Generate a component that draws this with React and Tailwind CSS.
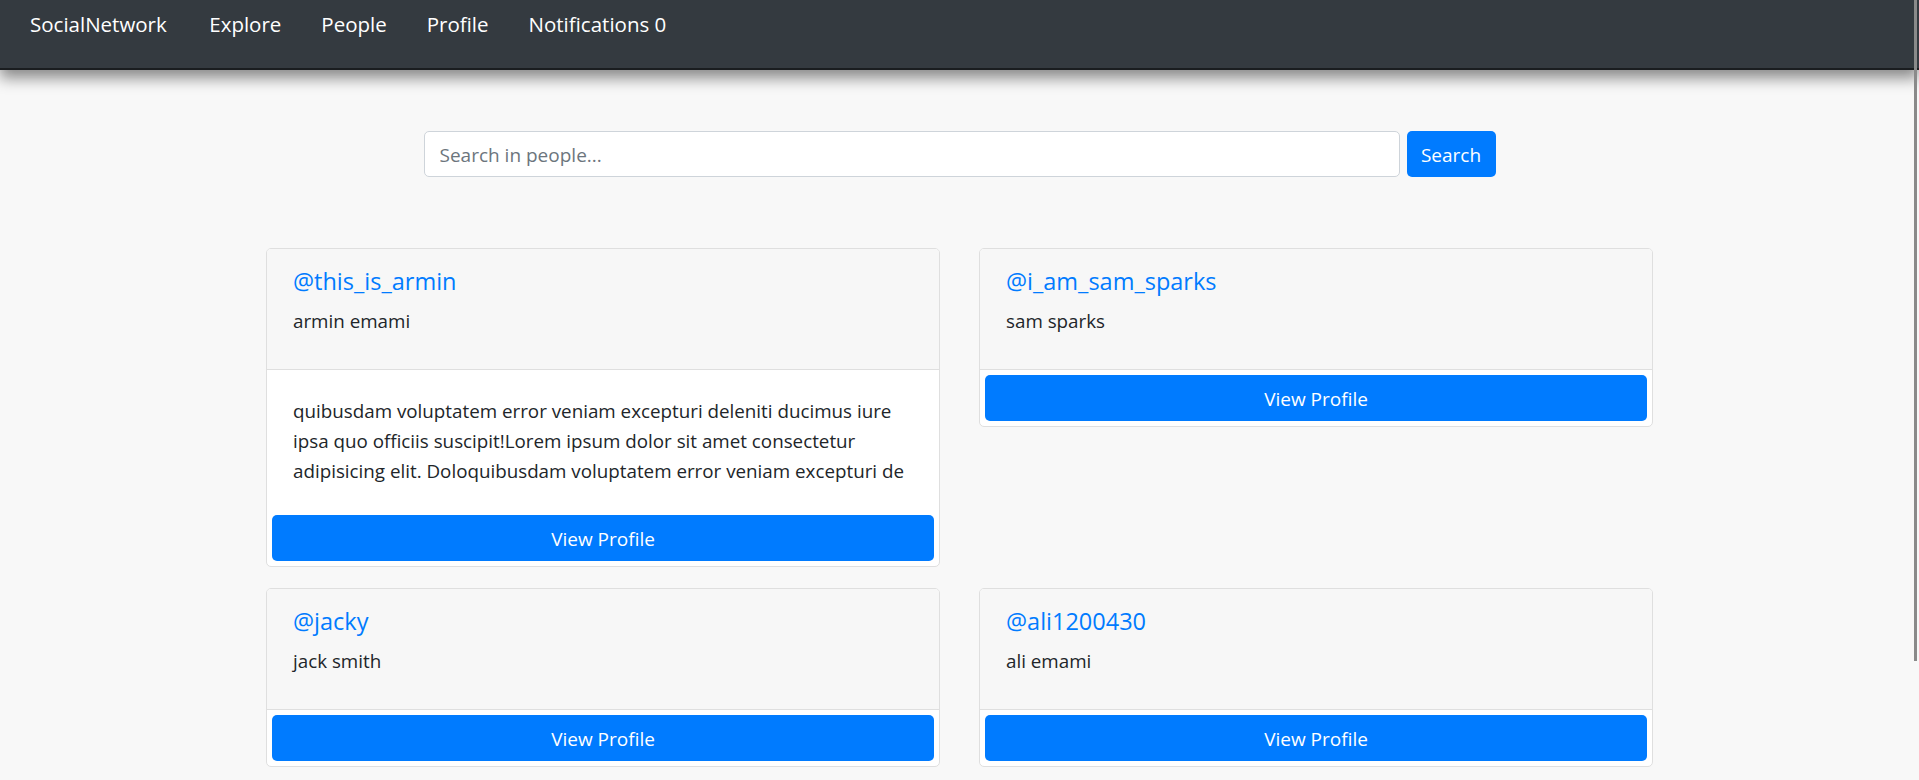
import React from 'react';

const people = [
    {
        username: 'this_is_armin',
        name: 'armin emami',
        bio: [
            'quibusdam voluptatem error veniam excepturi deleniti ducimus iure',
            'ipsa quo officiis suscipit!Lorem ipsum dolor sit amet consectetur',
            'adipisicing elit. Doloquibusdam voluptatem error veniam excepturi de',
        ],
    },
    { username: 'i_am_sam_sparks', name: 'sam sparks' },
    { username: 'jacky', name: 'jack smith' },
    { username: 'ali1200430', name: 'ali emami' },
];

const navLinks = ['Explore', 'People', 'Profile', 'Notifications 0'];

const PersonCard = ({ person }) => (
    <div className="bg-white border border-[#dfdfdf] rounded-[5px] overflow-hidden">
        {/* header */}
        <div className="bg-[#f7f7f7] border-b border-[#dfdfdf] px-[26px] pt-[17px] pb-[13px]">
            <h5 className="text-[23.5px] leading-[30px] text-[#007bff] mb-[10px]">@{person.username}</h5>
            <p className="text-[18.8px] leading-[30px] text-[#212529] mb-[20px]">{person.name}</p>
        </div>

        {person.bio && (
            <div className="px-[26px] pt-[26px] pb-[24px] text-[18.8px] leading-[30px] text-[#212529]">
                {person.bio.map((line, i) => (
                    <div key={i} className="whitespace-nowrap">{line}</div>
                ))}
            </div>
        )}

        <div className="p-[5px]">
            <button className="w-full h-[46px] pt-[3px] bg-[#007bff] text-white text-[19px] rounded-[5px]">
                View Profile
            </button>
        </div>
    </div>
);

export default function App() {
    return (
        <div
            className="min-h-screen bg-[#f8f8f8] relative"
            style={{ fontFamily: '"Segoe UI", "Open Sans", "Noto Sans", sans-serif' }}
        >
            {/* Navbar */}
            <nav className="h-[70px] bg-[#343a40] border-b-2 border-[#1a1d20] shadow-[0_8px_14px_rgba(0,0,0,0.45)] flex items-start gap-[40px] pl-[30px] pt-[9px] relative z-10">
                <a className="text-white text-[20.5px] leading-[30px] whitespace-nowrap mr-[2.5px]">SocialNetwork</a>
                {navLinks.map((link) => (
                    <a key={link} className="text-white text-[20.5px] leading-[30px] whitespace-nowrap">
                        {link}
                    </a>
                ))}
            </nav>

            {/* Search */}
            <div className="flex justify-center gap-[7px] mt-[61px]">
                <input
                    type="text"
                    placeholder="Search in people..."
                    className="w-[976px] h-[46px] bg-white border border-[#ced4da] rounded-[5px] px-[15px] pt-[2px] text-[19px] text-[#495057] placeholder:text-[#6c757d] outline-none"
                />
                <button className="w-[89px] h-[46px] pt-[2px] bg-[#007bff] text-white text-[19px] rounded-[5px]">
                    Search
                </button>
            </div>

            {/* People cards */}
            <div className="w-[1387px] mx-auto mt-[71px] grid grid-cols-2 gap-x-[39px] gap-y-[21px] items-start pb-[20px]">
                {people.map((p) => (
                    <PersonCard key={p.username} person={p} />
                ))}
            </div>

            {/* scrollbar thumb */}
            <div className="absolute top-0 right-[2px] w-[3px] h-[661px] bg-[#8a8a8a] z-20"></div>
        </div>
    );
}
